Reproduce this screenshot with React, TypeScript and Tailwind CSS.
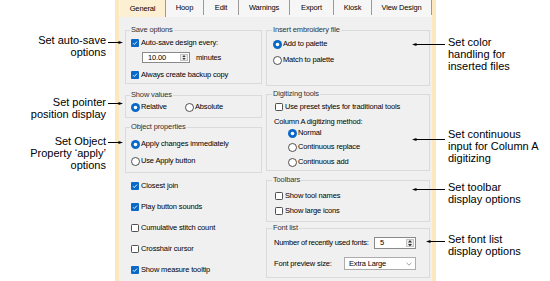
import React from "react";

const BLUE = "#0a68c8";

function Box({ checked }: { checked?: boolean }) {
  return (
    <svg width="8" height="8" viewBox="0 0 8 8" className="shrink-0">
      {checked ? (
        <>
          <rect x="0" y="0" width="8" height="8" rx="1" fill={BLUE} />
          <path d="M2 4.2 L3.3 5.5 L6 2.6" stroke="white" strokeWidth="0.9" fill="none" />
        </>
      ) : (
        <rect x="0.5" y="0.5" width="7" height="7" rx="0.8" fill="white" stroke="#3c3c3c" strokeWidth="0.9" />
      )}
    </svg>
  );
}

function Dot({ on }: { on?: boolean }) {
  return (
    <svg width="9" height="9" viewBox="0 0 9 9" className="shrink-0">
      {on ? (
        <>
          <circle cx="4.5" cy="4.5" r="4.5" fill={BLUE} />
          <circle cx="4.5" cy="4.5" r="1.8" fill="white" />
        </>
      ) : (
        <circle cx="4.5" cy="4.5" r="4" fill="white" stroke="#3c3c3c" strokeWidth="0.9" />
      )}
    </svg>
  );
}

function Check({ label, checked, className }: { label: string; checked?: boolean; className?: string }) {
  return (
    <div className={"flex h-[10px] items-center gap-[2px] whitespace-nowrap " + (className ?? "")}>
      <Box checked={checked} />
      <span>{label}</span>
    </div>
  );
}

function Radio({ label, on, className }: { label: string; on?: boolean; className?: string }) {
  return (
    <div className={"flex h-[10px] items-center gap-[1px] whitespace-nowrap " + (className ?? "")}>
      <Dot on={on} />
      <span>{label}</span>
    </div>
  );
}

function Group({ title, className, children }: { title: string; className: string; children: React.ReactNode }) {
  return (
    <fieldset className={"border border-[#dadada] " + className}>
      <legend className="-ml-[1px] h-[10px] px-[1px] leading-[10px] text-[#333]">{title}</legend>
      {children}
    </fieldset>
  );
}

function Spin({ value, className }: { value: string; className: string }) {
  return (
    <div className={"flex shrink-0 border border-[#8a8a8a] bg-white " + className}>
      <span className="flex-1 pl-[5px] leading-[10px]">{value}</span>
      <div className="my-[1px] mr-[1px] flex w-[8px] flex-col items-center justify-center gap-[1px] border border-[#c4c4c4] bg-[#eaeaea]">
        <svg width="4" height="2.5" viewBox="0 0 4 2.5">
          <path d="M0 2.5 L2 0 L4 2.5 Z" fill="#333" />
        </svg>
        <svg width="4" height="2.5" viewBox="0 0 4 2.5">
          <path d="M0 0 L2 2.5 L4 0 Z" fill="#333" />
        </svg>
      </div>
    </div>
  );
}

function ArrowRight({ className }: { className: string }) {
  return (
    <svg width="15" height="5" viewBox="0 0 15 5" className={"absolute z-10 " + className}>
      <line x1="0" y1="2.5" x2="12" y2="2.5" stroke="black" strokeWidth="1" />
      <path d="M10.5 1 L15 2.5 L10.5 4 Z" fill="black" />
    </svg>
  );
}

function ArrowLeft({ className, width }: { className: string; width: number }) {
  return (
    <svg width={width} height="5" viewBox={`0 0 ${width} 5`} className={"absolute z-10 " + className}>
      <line x1="3" y1="2.5" x2={width} y2="2.5" stroke="black" strokeWidth="1" />
      <path d="M4.5 1 L0 2.5 L4.5 4 Z" fill="black" />
    </svg>
  );
}

const tabs = [
  { name: "Hoop", w: "w-[38px]" },
  { name: "Edit", w: "w-[35px]" },
  { name: "Warnings", w: "w-[51px]" },
  { name: "Export", w: "w-[44px]" },
  { name: "Kiosk", w: "w-[38px]" },
  { name: "View Design", w: "w-[60px]" },
];

export default function App() {
  return (
    <div className="flex h-[281px] w-[550px] overflow-hidden bg-white font-['Liberation_Sans',Arial,sans-serif] text-black">
      {/* left notes */}
      <div className="flex w-[115px] shrink-0 flex-col pr-[9px] text-right text-[11px] leading-[12px]">
        <div className="relative mt-[34px]">
          <p>Set auto-save</p>
          <p>options</p>
          <ArrowRight className="left-[108px] top-[6px]" />
        </div>
        <div className="relative mt-[38px]">
          <p>Set pointer</p>
          <p>position display</p>
          <ArrowRight className="left-[108px] top-[5px]" />
        </div>
        <div className="relative mt-[15px]">
          <p>Set Object</p>
          <p>Property ‘apply’</p>
          <p>options</p>
          <ArrowRight className="left-[108px] top-[5px]" />
        </div>
      </div>

      {/* dialog */}
      <div className="flex h-[281px] w-[321px] shrink-0 flex-col border-x-4 border-[#fbe8bf] bg-[#f0f0f0] text-[7.5px] leading-[10px] tracking-[-0.15px]">
        <div className="flex h-[17px] bg-[#f6f6f6] pl-[1px]">
          <div className="flex h-[17px] w-[46px] items-center justify-center border-r border-[#9a9a9a] bg-[#fdefd2]">
            General
          </div>
          {tabs.map((t) => (
            <div key={t.name} className={"mb-[2px] flex items-center justify-center border-r border-[#9a9a9a] " + t.w}>
              {t.name}
            </div>
          ))}
        </div>

        <div className="flex gap-[4px] pl-[6px] pr-[2px]">
          {/* left column */}
          <div className="flex w-[137px] flex-col">
            <Group title="Save options" className="mt-[8px] h-[59px] pl-[5px]">
              <Check className="mt-[3px]" checked label="Auto-save design every:" />
              <div className="mt-[4px] flex items-center">
                <Spin value="10.00" className="ml-[11px] h-[11px] w-[48px]" />
                <span className="ml-[6px]">minutes</span>
              </div>
              <Check className="mt-[7px]" checked label="Always create backup copy" />
            </Group>
            <Group title="Show values" className="mt-[6px] h-[28px] pl-[5px]">
              <div className="mt-[2px] flex">
                <Radio className="w-[54px]" on label="Relative" />
                <Radio label="Absolute" />
              </div>
            </Group>
            <Group title="Object properties" className="mt-[4px] h-[51px] pl-[5px]">
              <Radio className="mt-[7px]" on label="Apply changes immediately" />
              <Radio className="mt-[7px]" label="Use Apply button" />
            </Group>
            <div className="mt-[8px] flex flex-col gap-[11px] pl-[6px]">
              <Check checked label="Closest join" />
              <Check checked label="Play button sounds" />
              <Check label="Cumulative stitch count" />
              <Check label="Crosshair cursor" />
              <Check checked label="Show measure tooltip" />
            </div>
          </div>

          {/* right column */}
          <div className="flex w-[164px] flex-col">
            <Group title="Insert embroidery file" className="mt-[8px] h-[61px] pl-[6px]">
              <Radio className="mt-[4px]" on label="Add to palette" />
              <Radio className="mt-[6px]" label="Match to palette" />
            </Group>
            <Group title="Digitizing tools" className="mt-[3px] h-[82px] pl-[6px]">
              <Check className="ml-[2px] mt-[3px]" label="Use preset styles for traditional tools" />
              <p className="ml-[1px] mt-[5px]">Column A digitizing method:</p>
              <Radio className="ml-[15px] mt-[1px]" on label="Normal" />
              <Radio className="ml-[15px] mt-[4px]" label="Continuous replace" />
              <Radio className="ml-[15px] mt-[5px]" label="Continuous add" />
            </Group>
            <Group title="Toolbars" className="mt-[4px] h-[47px] pl-[6px]">
              <Check className="ml-[2px] mt-[6px]" label="Show tool names" />
              <Check className="ml-[2px] mt-[5px]" label="Show large icons" />
            </Group>
            <Group title="Font list" className="mt-[1px] h-[55px] pl-[6px]">
              <div className="ml-[1px] mt-[4px] flex h-[12px] items-center">
                <span className="w-[100px] whitespace-nowrap tracking-[-0.25px]">Number of recently used fonts:</span>
                <Spin value="5" className="h-[12px] w-[42px]" />
              </div>
              <div className="ml-[1px] mt-[8px] flex h-[13px] items-center">
                <span className="w-[70px] whitespace-nowrap">Font preview size:</span>
                <div className="flex h-[13px] w-[72px] items-center justify-between border border-[#adadad] bg-white pl-[4px] pr-[3px]">
                  <span>Extra Large</span>
                  <svg width="6" height="4" viewBox="0 0 6 4">
                    <path d="M0.5 0.8 L3 3.2 L5.5 0.8" stroke="#888" strokeWidth="0.8" fill="none" />
                  </svg>
                </div>
              </div>
            </Group>
          </div>
        </div>
      </div>

      {/* right notes */}
      <div className="flex flex-1 flex-col pl-[12px] text-[11px] leading-[12px]">
        <div className="relative mt-[36px]">
          <p>Set color</p>
          <p>handling for</p>
          <p>inserted files</p>
          <ArrowLeft className="left-[-36px] top-[6px]" width={33} />
        </div>
        <div className="relative mt-[56px]">
          <p>Set continuous</p>
          <p>input for Column A</p>
          <p>digitizing</p>
          <ArrowLeft className="left-[-36px] top-[9px]" width={33} />
        </div>
        <div className="relative mt-[17px]">
          <p>Set toolbar</p>
          <p>display options</p>
          <ArrowLeft className="left-[-36px] top-[6px]" width={33} />
        </div>
        <div className="relative mt-[28px]">
          <p>Set font list</p>
          <p>display options</p>
          <ArrowLeft className="left-[-22px] top-[6px]" width={19} />
        </div>
      </div>
    </div>
  );
}
